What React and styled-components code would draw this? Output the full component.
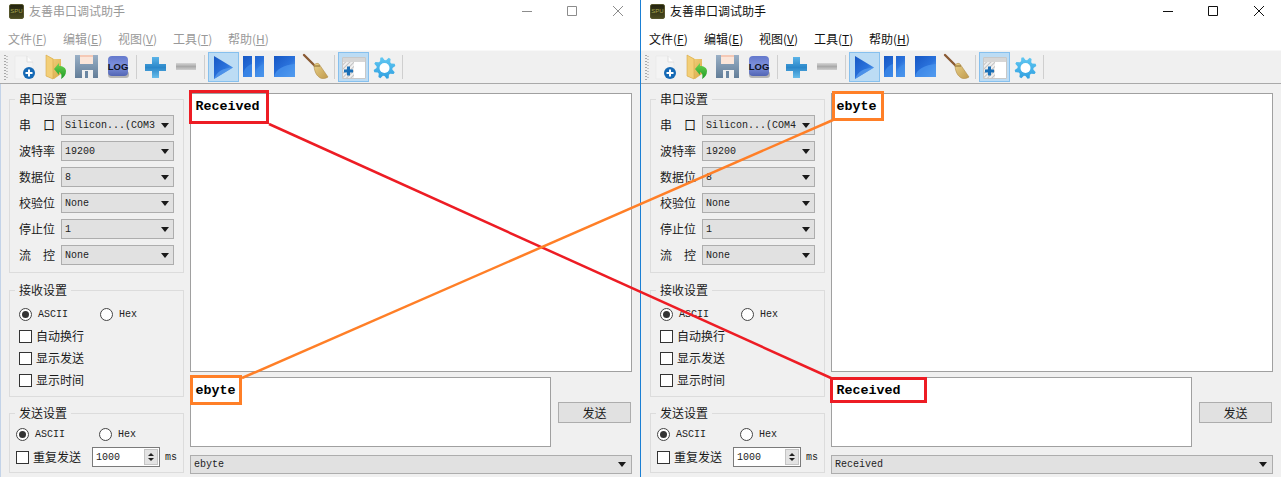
import React from 'react';
import styled, { createGlobalStyle } from 'styled-components';

const UI_FONT = `"Noto Sans CJK SC", "Liberation Sans", sans-serif`;
const MONO_FONT = `"Liberation Mono", "Noto Sans CJK SC", monospace`;

const GlobalStyle = createGlobalStyle`
    html, body {
        margin: 0;
        padding: 0;
        overflow: hidden;
        background: #f0f0f0;
    }
    * {
        box-sizing: border-box;
    }
`;

const Page = styled.div`
    position: relative;
    display: flex;
    width: 1281px;
    height: 477px;
    overflow: hidden;
    font-family: ${UI_FONT};
    font-size: 12px;
    color: #1a1a1a;
`;

const Overlay = styled.svg`
    position: absolute;
    left: 0;
    top: 0;
    pointer-events: none;
`;

const WindowFrame = styled.div`
    width: ${p => (p.$active ? 641 : 640)}px;
    height: 477px;
    flex: none;
    background: #f0f0f0;
    border-left: ${p => (p.$active ? '1px solid #1a7fd4' : '0')};
    box-shadow: ${p => (p.$active ? 'none' : 'inset 1px 0 0 #c3d3e8')};
`;

const Chrome = styled.div`
    height: 50px;
    background: #ffffff;
    color: ${p => (p.$active ? '#111111' : '#999999')};
`;

const TitleBar = styled.div`
    display: flex;
    align-items: center;
    height: 23px;
    padding-left: 9px;
`;

const AppIcon = styled.div`
    width: 15px;
    height: 15px;
    margin-right: 5px;
    border: 1px solid #55552c;
    border-radius: 2px;
    background: linear-gradient(#23230f, #4a4a20);
    color: #a8a850;
    font-family: "Liberation Sans", sans-serif;
    font-size: 6px;
    line-height: 13px;
    text-align: center;
`;

const TitleText = styled.div`
    flex: 1;
    padding-bottom: 2px;
    font-size: 12px;
    line-height: 16px;
`;

const WinButton = styled.div`
    display: flex;
    align-items: center;
    justify-content: center;
    align-self: flex-start;
    width: ${p => p.$width}px;
    height: 22px;
`;

const MenuBar = styled.div`
    display: flex;
    align-items: center;
    height: 22px;
    padding: 0 0 0 8px;
    margin-top: 5px;
`;

const MenuItem = styled.div`
    width: 55px;
    line-height: 16px;
    white-space: nowrap;
`;

const Toolbar = styled.div`
    display: flex;
    align-items: center;
    height: 34px;
    border-top: 1px solid #f8f8f8;
    border-bottom: 1px solid #a9a9a9;
    background: #f0f0f0;
`;

const Grip = styled.div`
    width: 4px;
    height: 25px;
    margin: 0 2px 0 4px;
    background-image:
        repeating-linear-gradient(#a8a8a8 0 1px, transparent 1px 3px),
        repeating-linear-gradient(transparent 0 1px, #c4c4c4 1px 2px, transparent 2px 3px);
    background-size: 2px 100%, 2px 100%;
    background-position: 0 0, 2px 0;
    background-repeat: no-repeat;
`;

const ToolSep = styled.div`
    width: 6px;
    height: 24px;
    flex: none;
    background: linear-gradient(#cfcfcf, #cfcfcf) 2px 0 / 1px 100% no-repeat;
`;

const ToolButton = styled.div`
    width: 31px;
    height: 30px;
    flex: none;
    background: ${p => (p.$on ? '#bcdcf4' : 'transparent')};
    box-shadow: ${p => (p.$on ? 'inset 0 0 0 1px #86c0ee' : 'none')};
    svg {
        display: block;
    }
`;

const Body = styled.div`
    display: flex;
    height: 393px;
`;

const SidePanel = styled.div`
    display: flex;
    flex-direction: column;
    width: 175px;
    margin: 7px 6px 0 9px;
`;

const Group = styled.fieldset`
    margin: 0 0 ${p => p.$gap || 0}px;
    padding: ${p => p.$top}px 0 0;
    height: ${p => p.$height}px;
    border: 1px solid #dcdcdc;
    min-width: 0;
`;

const Legend = styled.legend`
    margin-left: 5px;
    padding: 0 4px 0 4px;
    font-size: 12px;
    line-height: 16px;
    height: 16px;
`;

const FieldRow = styled.div`
    display: flex;
    align-items: center;
    height: 20px;
    margin: 0 0 6px 9px;
`;

const FieldLabel = styled.div`
    display: flex;
    justify-content: space-between;
    width: 36px;
    margin-right: 6px;
    line-height: 16px;
`;

const Combo = styled.div`
    position: relative;
    display: flex;
    align-items: center;
    width: ${p => p.$width};
    height: ${p => p.$height}px;
    padding-left: ${p => p.$indent}px;
    background: #e1e1e1;
    border: 1px solid #adadad;
    font-family: ${MONO_FONT};
    font-size: 10px;
    color: #222222;
    white-space: nowrap;
    overflow: hidden;
`;

const ComboText = styled.span`
    flex: 1;
    overflow: hidden;
`;

const ComboArrow = styled.span`
    flex: none;
    width: 0;
    height: 0;
    margin: 0 ${p => p.$right}px 0 4px;
    border-left: 4px solid transparent;
    border-right: 4px solid transparent;
    border-top: 5px solid #1a1a1a;
`;

const OptionRow = styled.div`
    display: flex;
    align-items: center;
    height: ${p => p.$height}px;
    padding-left: ${p => p.$indent}px;
`;

const RadioItem = styled.label`
    display: flex;
    align-items: center;
    width: ${p => p.$width}px;
    font-family: ${MONO_FONT};
    font-size: 10px;
    color: #222222;
`;

const RadioMark = styled.span`
    display: flex;
    align-items: center;
    justify-content: center;
    width: 13px;
    height: 13px;
    margin-right: 6px;
    border: 1px solid #444444;
    border-radius: 50%;
    background: #ffffff;
    &::after {
        content: '';
        width: 7px;
        height: 7px;
        border-radius: 50%;
        background: ${p => (p.$on ? '#333333' : 'transparent')};
    }
`;

const CheckItem = styled.label`
    display: flex;
    align-items: center;
    line-height: 16px;
    font-size: 12px;
`;

const CheckMark = styled.span`
    width: 13px;
    height: 13px;
    margin-right: ${p => p.$gap}px;
    border: 1px solid #333333;
    background: #ffffff;
`;

const Spin = styled.div`
    display: flex;
    align-items: center;
    width: 68px;
    height: 20px;
    margin-left: 11px;
    padding: 1px 1px 1px 3px;
    border: 1px solid #7a7a7a;
    background: #ffffff;
    font-family: ${MONO_FONT};
    font-size: 10px;
    color: #222222;
`;

const SpinText = styled.span`
    flex: 1;
`;

const SpinArrows = styled.div`
    display: flex;
    flex-direction: column;
    align-items: center;
    justify-content: space-evenly;
    width: 14px;
    height: 16px;
    background: #e3e3e3;
    border: 1px solid #c4c4c4;
`;

const SpinArrow = styled.span`
    width: 0;
    height: 0;
    border-left: 3px solid transparent;
    border-right: 3px solid transparent;
    border-bottom: ${p => (p.$up ? '3px solid #222222' : '0')};
    border-top: ${p => (p.$up ? '0' : '3px solid #222222')};
`;

const Unit = styled.span`
    margin-left: 5px;
    font-family: ${MONO_FONT};
    font-size: 10px;
    color: #222222;
`;

const MainColumn = styled.div`
    display: flex;
    flex-direction: column;
    width: 442px;
    padding-top: 9px;
`;

const TextBox = styled.div`
    width: ${p => p.$width || '100%'};
    height: ${p => p.$height}px;
    padding: 5px 4.5px;
    background: #ffffff;
    border: 1px solid #a0a0a0;
    font-family: ${MONO_FONT};
    font-size: 13.33px;
    font-weight: bold;
    line-height: 16px;
    color: #000000;
`;

const SendRow = styled.div`
    display: flex;
    margin: 5px 0 8px;
`;

const SendButton = styled.div`
    display: flex;
    align-items: center;
    justify-content: center;
    align-self: flex-start;
    width: 73px;
    height: 21px;
    margin: 25px 0 0 7px;
    background: #e1e1e1;
    border: 1px solid #adadad;
    line-height: 16px;
`;

// outline of a cog, used by the settings icon
const gearPoints = n => {
    const pts = [];
    for (let i = 0; i < n * 4; i++) {
        const a = (i / (n * 4)) * Math.PI * 2 - Math.PI / 8;
        const r = i % 4 < 2 ? 11 : 8;
        pts.push(`${(15.5 + r * Math.cos(a)).toFixed(1)},${(16 + r * Math.sin(a)).toFixed(1)}`);
    }
    return pts.join(' ');
};

const IconDefs = () => (
    <svg width="0" height="0" style={{ position: 'absolute' }}>
        <defs>
            <linearGradient id="gBlue" x1="0" y1="0" x2="1" y2="1">
                <stop offset="0" stopColor="#1757c4" />
                <stop offset="0.55" stopColor="#2a72dc" />
                <stop offset="1" stopColor="#6cb0f2" />
            </linearGradient>
            <linearGradient id="gPlus" x1="0" y1="0" x2="0" y2="1">
                <stop offset="0" stopColor="#5bb4e8" />
                <stop offset="0.5" stopColor="#2b87c9" />
                <stop offset="1" stopColor="#68bdea" />
            </linearGradient>
            <linearGradient id="gGrey" x1="0" y1="0" x2="0" y2="1">
                <stop offset="0" stopColor="#d6d6d6" />
                <stop offset="0.5" stopColor="#a9a9a9" />
                <stop offset="1" stopColor="#cfcfcf" />
            </linearGradient>
            <linearGradient id="gFolder" x1="0" y1="0" x2="1" y2="1">
                <stop offset="0" stopColor="#f8dd8c" />
                <stop offset="1" stopColor="#d9a948" />
            </linearGradient>
            <linearGradient id="gArrow" x1="0" y1="0" x2="0" y2="1">
                <stop offset="0" stopColor="#6fd450" />
                <stop offset="1" stopColor="#1b9a26" />
            </linearGradient>
            <linearGradient id="gDisk" x1="0" y1="0" x2="0" y2="1">
                <stop offset="0" stopColor="#9ab0c6" />
                <stop offset="1" stopColor="#627d98" />
            </linearGradient>
            <linearGradient id="gLog" x1="0" y1="0" x2="0" y2="1">
                <stop offset="0" stopColor="#6478cc" />
                <stop offset="0.5" stopColor="#7f92dd" />
                <stop offset="1" stopColor="#5265b4" />
            </linearGradient>
            <linearGradient id="gGear" x1="0" y1="0" x2="0" y2="1">
                <stop offset="0" stopColor="#62c8f2" />
                <stop offset="1" stopColor="#2f9fe0" />
            </linearGradient>
            <linearGradient id="gBroom" x1="0" y1="0" x2="1" y2="1">
                <stop offset="0" stopColor="#e8d089" />
                <stop offset="1" stopColor="#c09a4c" />
            </linearGradient>
            <pattern id="gHatch" width="3" height="3" patternUnits="userSpaceOnUse" patternTransform="rotate(45)">
                <rect width="3" height="3" fill="#efefef" />
                <rect width="1" height="3" fill="#c4c4c4" />
            </pattern>
        </defs>
    </svg>
);

const Ico = ({ children }) => (
    <svg width="31" height="30" viewBox="0 0 31 30">{children}</svg>
);

const NewIcon = () => (
    <Ico>
        <path d="M5 4h12l6 6v17H5z" fill="#f4f4f4" stroke="#ebebeb" />
        <path d="M17 4v6h6" fill="#fcfcfc" stroke="#dedede" />
        <circle cx="19" cy="21" r="6" fill="#1569b5" />
        <path d="M15.500 21h7M19 17.500v7" stroke="#ffffff" strokeWidth="2" />
    </Ico>
);

const FolderIcon = () => (
    <Ico>
        <path d="M5 3l8 4h7v15l-7 5-8-3z" fill="url(#gFolder)" />
        <path d="M5 3l7 4v20l-7-3z" fill="#f3cf78" stroke="#d6a84a" strokeWidth="0.6" />
        <path d="M25 19c0 4-2 6-5 8 1-3 .5-6-2-7v3l-5-6 5-6v3c4 0 7 2 7 5z" fill="url(#gArrow)" />
    </Ico>
);

const SaveIcon = () => (
    <Ico>
        <path d="M3 3h23v23H3z" fill="url(#gDisk)" />
        <path d="M8 3h13v9H8z" fill="#fbe6da" />
        <path d="M8 3h13v2H8z" fill="#f5c9b6" />
        <path d="M10 18h11v8H10z" fill="#f0f0f0" />
        <path d="M13 19h3v7h-3z" fill="#6a86a2" />
    </Ico>
);

const LogIcon = () => (
    <Ico>
        <rect x="5" y="19" width="21" height="7" rx="3" fill="#b4b4b4" />
        <rect x="5" y="4" width="20" height="20" rx="4" fill="url(#gLog)" />
        <text x="15" y="17.500" textAnchor="middle" fontFamily="Liberation Sans, sans-serif" fontSize="9.5" fontWeight="bold" fill="#10131f">LOG</text>
    </Ico>
);

const PlusIcon = () => (
    <Ico>
        <path d="M12 5h7v7h7v7h-7v7h-7v-7H5v-7h7z" fill="url(#gPlus)" />
    </Ico>
);

const MinusIcon = () => (
    <Ico>
        <path d="M5 11h20v7H5z" fill="url(#gGrey)" />
    </Ico>
);

const PlayIcon = () => (
    <Ico>
        <path d="M6 4l19 11.500L6 27z" fill="url(#gBlue)" />
        <path d="M6 27c3-8 9-11 19-11.500z" fill="#5a9cec" opacity="0.7" />
    </Ico>
);

const PauseIcon = () => (
    <Ico>
        <path d="M4 4h9v21H4zM16 4h9v21h-9z" fill="url(#gBlue)" />
        <path d="M4 25c0-7 3-11 9-13v13zM16 25c0-7 3-11 9-13v13z" fill="#3f8cea" opacity="0.7" />
    </Ico>
);

const StopIcon = () => (
    <Ico>
        <path d="M4 4h21v21H4z" fill="url(#gBlue)" />
        <path d="M4 25c1-8 10-12 21-13v13z" fill="#4a94ee" opacity="0.75" />
    </Ico>
);

const BroomIcon = () => (
    <Ico>
        <path d="M3 3l12 12" stroke="#8a5a34" strokeWidth="2.400" strokeLinecap="round" />
        <path d="M13 13c2-2 4-2 5-1l9 13c-3 2-7 2-9 0-3-2-5-7-5-12z" fill="url(#gBroom)" stroke="#b08c48" strokeWidth="0.6" />
        <path d="M13 14l6 0" stroke="#8a6a30" />
    </Ico>
);

const PanelIcon = () => (
    <Ico>
        <path d="M4.500 5.500h23v21h-23z" fill="#ffffff" stroke="#c8c8c8" />
        <path d="M5 6h22v4H5z" fill="#d6d6d6" />
        <path d="M5 10h11v16H5z" fill="url(#gHatch)" />
        <path d="M6 19h9M10.500 14.500v9" stroke="#1a70b8" strokeWidth="3" />
    </Ico>
);

const GearIcon = () => (
    <Ico>
        <polygon points={gearPoints(8)} fill="url(#gGear)" />
        <circle cx="15.500" cy="16" r="5" fill="#ffffff" />
    </Ico>
);

const MinIcon = ({ color }) => (
    <svg width="12" height="12" viewBox="0 0 12 12"><path d="M1 6.500h10" stroke={color} /></svg>
);

const MaxIcon = ({ color }) => (
    <svg width="12" height="12" viewBox="0 0 12 12"><path d="M1.500 1.500h9v9h-9z" fill="none" stroke={color} /></svg>
);

const CloseIcon = ({ color }) => (
    <svg width="12" height="12" viewBox="0 0 12 12"><path d="M1 1l10 10M11 1L1 11" stroke={color} /></svg>
);

const MENUS = [['文件', 'F'], ['编辑', 'E'], ['视图', 'V'], ['工具', 'T'], ['帮助', 'H']];
const PORT_FIELDS = [
    { label: ['波', '特', '率'], value: '19200' },
    { label: ['数', '据', '位'], value: '8' },
    { label: ['校', '验', '位'], value: 'None' },
    { label: ['停', '止', '位'], value: '1' },
    { label: ['流', '控'], value: 'None' },
];

const Field = ({ label, value }) => (
    <FieldRow>
        <FieldLabel>{label.map((c, i) => <span key={i}>{c}</span>)}</FieldLabel>
        <Combo $width="113px" $height={20} $indent={3}>
            <ComboText>{value}</ComboText>
            <ComboArrow $right={4} />
        </Combo>
    </FieldRow>
);

const SerialWindow = ({ active, port, received, sent, history }) => {
    const ctl = active ? '#111111' : '#8c8c8c';
    return (
        <WindowFrame $active={active}>
            <Chrome $active={active}>
                <TitleBar>
                    <AppIcon>SPU</AppIcon>
                    <TitleText>友善串口调试助手</TitleText>
                    <WinButton $width={42}><MinIcon color={ctl} /></WinButton>
                    <WinButton $width={48}><MaxIcon color={ctl} /></WinButton>
                    <WinButton $width={44}><CloseIcon color={ctl} /></WinButton>
                </TitleBar>
                <MenuBar>
                    {MENUS.map(([name, key]) => (
                        <MenuItem key={key}>{name}(<u>{key}</u>)</MenuItem>
                    ))}
                </MenuBar>
            </Chrome>
            <Toolbar>
                <Grip />
                <ToolButton><NewIcon /></ToolButton>
                <ToolButton><FolderIcon /></ToolButton>
                <ToolButton><SaveIcon /></ToolButton>
                <ToolButton><LogIcon /></ToolButton>
                <ToolSep />
                <ToolButton><PlusIcon /></ToolButton>
                <ToolButton><MinusIcon /></ToolButton>
                <ToolSep />
                <ToolButton $on><PlayIcon /></ToolButton>
                <ToolButton><PauseIcon /></ToolButton>
                <ToolButton><StopIcon /></ToolButton>
                <ToolButton><BroomIcon /></ToolButton>
                <ToolSep />
                <ToolButton $on><PanelIcon /></ToolButton>
                <ToolButton><GearIcon /></ToolButton>
                <ToolSep />
            </Toolbar>
            <Body>
                <SidePanel>
                    <Group $height={182} $gap={9} $top={8}>
                        <Legend>串口设置</Legend>
                        <Field label={['串', '口']} value={port} />
                        {PORT_FIELDS.map(f => <Field key={f.label.join('')} {...f} />)}
                    </Group>
                    <Group $height={115} $gap={8} $top={6}>
                        <Legend>接收设置</Legend>
                        <OptionRow $height={21} $indent={9}>
                            <RadioItem $width={81}><RadioMark $on />ASCII</RadioItem>
                            <RadioItem><RadioMark />Hex</RadioItem>
                        </OptionRow>
                        <OptionRow $height={22} $indent={9}><CheckItem><CheckMark $gap={4} />自动换行</CheckItem></OptionRow>
                        <OptionRow $height={22} $indent={9}><CheckItem><CheckMark $gap={4} />显示发送</CheckItem></OptionRow>
                        <OptionRow $height={22} $indent={9}><CheckItem><CheckMark $gap={4} />显示时间</CheckItem></OptionRow>
                    </Group>
                    <Group $height={68} $top={2}>
                        <Legend>发送设置</Legend>
                        <OptionRow $height={22} $indent={6}>
                            <RadioItem $width={83}><RadioMark $on />ASCII</RadioItem>
                            <RadioItem><RadioMark />Hex</RadioItem>
                        </OptionRow>
                        <OptionRow $height={24} $indent={6}>
                            <CheckItem><CheckMark $gap={4} />重复发送</CheckItem>
                            <Spin>
                                <SpinText>1000</SpinText>
                                <SpinArrows><SpinArrow $up /><SpinArrow /></SpinArrows>
                            </Spin>
                            <Unit>ms</Unit>
                        </OptionRow>
                    </Group>
                </SidePanel>
                <MainColumn>
                    <TextBox $height={279}>{received}</TextBox>
                    <SendRow>
                        <TextBox $width="361px" $height={70}>{sent}</TextBox>
                        <SendButton>发送</SendButton>
                    </SendRow>
                    <Combo $width="100%" $height={19} $indent={3}>
                        <ComboText>{history}</ComboText>
                        <ComboArrow $right={5} />
                    </Combo>
                </MainColumn>
            </Body>
        </WindowFrame>
    );
};

const App = () => (
    <Page>
        <GlobalStyle />
        <IconDefs />
        <SerialWindow port="Silicon...(COM3" received="Received" sent="ebyte" history="ebyte" />
        <SerialWindow active port="Silicon...(COM4" received="ebyte" sent="Received" history="Received" />
        <Overlay width="1281" height="477" viewBox="0 0 1281 477">
            <g fill="none" strokeWidth="3">
                <rect x="190.500" y="91.500" width="77" height="31" stroke="#ed1c24" />
                <rect x="831.500" y="378.500" width="94" height="23" stroke="#ed1c24" />
                <rect x="191.500" y="376.500" width="49" height="27" stroke="#ff7f27" />
                <rect x="833.500" y="92.500" width="49" height="27" stroke="#ff7f27" />
            </g>
            <path d="M269 124L831 378" stroke="#ed1c24" strokeWidth="2.500" />
            <path d="M242 378L833 120" stroke="#ff7f27" strokeWidth="2.500" />
        </Overlay>
    </Page>
);

export default App;
